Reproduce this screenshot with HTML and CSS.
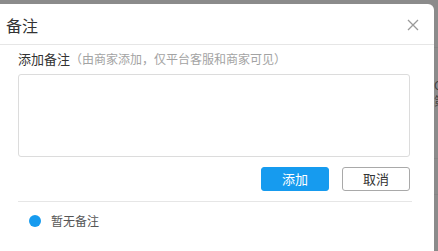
FILE: index.html
```html
<!DOCTYPE html>
<html lang="zh">
<head>
<meta charset="utf-8">
<link rel="stylesheet" href="styles.css">
</head>
<body>
<div class="page">
  <div class="modal">
    <div class="modal-header">
      <span class="modal-title">备注</span>
      <svg class="close" width="12" height="12" viewBox="0 0 12 12"><path d="M1 1L11 11M11 1L1 11" stroke="#999" stroke-width="1.3" fill="none"/></svg>
    </div>
    <div class="modal-body">
      <div class="label">添加备注<span class="hint">（由商家添加，仅平台客服和商家可见）</span></div>
      <div class="textarea"></div>
      <div class="actions">
        <button class="btn btn-primary">添加</button>
        <button class="btn btn-default">取消</button>
      </div>
      <div class="divider"></div>
      <div class="note-item"><span class="dot"></span><span class="note-text">暂无备注</span></div>
    </div>
  </div>
  <div class="behind">
    <div class="behind-line l1"></div>
    <div class="behind-text t1">C</div>
    <div class="behind-text t2">第</div>
    <div class="behind-line l2"></div>
    <div class="behind-line l3"></div>
  </div>
</div>
</body>
</html>
```
FILE: styles.css
```css
html, body {
  margin: 0;
  padding: 0;
  background: #8b8b8b;
  font-family: "Noto Sans CJK SC", "Noto Sans", sans-serif;
  overflow: hidden;
}
.page {
  display: flex;
  height: 251px;
  padding-top: 4px;
  box-sizing: border-box;
}
.modal {
  width: 434px;
  flex: none;
  background: #fff;
  border-top-right-radius: 6px;
  box-sizing: border-box;
}
.modal-header {
  height: 40px;
  border-bottom: 1px solid #e6e6e6;
  display: flex;
  align-items: center;
  justify-content: space-between;
  padding: 0 15px 0 6px;
}
.modal-title {
  font-size: 16px;
  color: #333;
  line-height: 20px;
  margin-top: 2px;
}
.close {
  margin-top: 1px;
}
.modal-body {
  padding: 4px 24px 0 18px;
}
.label {
  font-size: 13px;
  color: #333;
  line-height: 20px;
  height: 20px;
}
.hint {
  font-size: 12px;
  color: #a3a3a3;
}
.textarea {
  margin-top: 5px;
  height: 81px;
  border: 1px solid #dcdcdc;
  border-radius: 3px;
}
.actions {
  display: flex;
  justify-content: flex-end;
  gap: 13px;
  margin-top: 10px;
}
.btn {
  width: 68px;
  height: 24px;
  border-radius: 3px;
  font-family: inherit;
  font-size: 13px;
  padding: 0;
  line-height: 22px;
}
.btn-primary {
  background: #169bef;
  border: 1px solid #169bef;
  color: #fff;
}
.btn-default {
  background: #fff;
  border: 1px solid #a9a9a9;
  color: #333;
}
.divider {
  margin-top: 10px;
  height: 1px;
  background: #e6e6e6;
  margin-right: -2px;
}
.note-item {
  display: flex;
  align-items: center;
  margin-top: 11px;
  padding-left: 11px;
}
.dot {
  width: 12px;
  height: 12px;
  border-radius: 50%;
  background: #169bef;
  flex: none;
}
.note-text {
  margin-left: 10px;
  font-size: 12px;
  color: #555;
  line-height: 16px;
}
.behind {
  flex: 1;
  position: relative;
  overflow: hidden;
  background: #8b8b8b;
}
.behind-line {
  position: absolute;
  left: 0;
  right: 0;
  height: 1px;
  background: #848484;
}
.l1 { top: 43px; }
.l2 { top: 154px; }
.l3 { top: 190px; }
.behind-text {
  position: absolute;
  left: 0;
  font-size: 12px;
  color: #444;
  line-height: 14px;
}
.t1 { top: 74px; }
.t2 { top: 90px; }
```
